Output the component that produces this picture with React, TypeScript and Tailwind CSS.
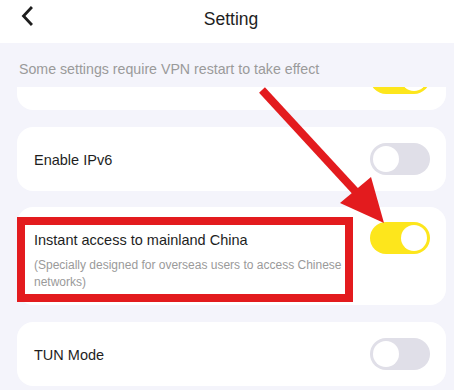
type ToggleProps = { on?: boolean };

const Toggle = ({ on }: ToggleProps) => (
  <div
    className={
      on
        ? "flex h-[32px] w-[60px] shrink-0 items-center justify-end rounded-full bg-[#fde61c] px-[3px]"
        : "flex h-[32px] w-[60px] shrink-0 items-center justify-start rounded-full bg-[#e0dfe8] px-[3px]"
    }
  >
    <div className="h-[26px] w-[26px] rounded-full bg-white" />
  </div>
);

const Row = ({ title, on }: { title?: string; on?: boolean }) => (
  <div className="flex h-[64px] items-center justify-between rounded-[16px] bg-white pl-[17px] pr-[16px]">
    <span className="pt-[3px] text-[14.5px] text-[#1e1e1e]">{title}</span>
    <Toggle on={on} />
  </div>
);

export default function App() {
  return (
    <div
      className="relative h-[390px] w-[454px] overflow-hidden bg-[#f4f4fb]"
      style={{ fontFamily: '"Liberation Sans", Arial, sans-serif' }}
    >
      {/* header */}
      <div className="relative flex h-[43px] items-center justify-center bg-white pb-[4px] pl-[8px]">
        <svg className="absolute left-[18px] top-[5px]" width="18" height="22" viewBox="0 0 18 22" fill="none">
          <path d="M13 3 L5.5 11 L13 19" stroke="#1e1e1e" strokeWidth="2.8" strokeLinecap="square" />
        </svg>
        <span className="text-[17.5px] text-[#1e1e1e]">Setting</span>
      </div>

      <div className="h-[44px] pl-[19px] pt-[18px] text-[14.2px] leading-[17px] text-[#9a9a9a]">
        Some settings require VPN restart to take effect
      </div>

      {/* scrolled list, first card mostly under the hint */}
      <div className="h-[303px] overflow-hidden pl-[17px] pr-[8px]">
        <div className="-mt-[41px] flex flex-col">
          <Row on />
          <div className="h-[17px]" />
          <Row title="Enable IPv6" />
          <div className="h-[16px]" />
          <div className="relative flex items-start justify-between rounded-[16px] bg-white pb-[14px] pl-[17px] pr-[16px] pt-[16px]">
            <div className="w-[316px]">
              <div className="flex h-[32px] items-center pt-[3px] text-[14.5px] text-[#1e1e1e]">
                Instant access to mainland China
              </div>
              <div className="mt-[2px] text-[12px] leading-[17px] text-[#9a9a9a]">
                (Specially designed for overseas users to access Chinese networks)
              </div>
            </div>
            <div className="-mt-[1px]">
              <Toggle on />
            </div>
            <div className="absolute left-0 top-[10px] h-[85px] w-[336px] border-[8px] border-[#e31b1e]" />
          </div>
          <div className="h-[17px]" />
          <Row title="TUN Mode" />
        </div>
      </div>

      {/* annotation arrow */}
      <svg className="absolute left-0 top-0" width="454" height="390" viewBox="0 0 454 390">
        <line x1="262" y1="90" x2="357" y2="193" stroke="#e31b1e" strokeWidth="8" />
        <polygon points="384,223 340,203 371,177" fill="#e31b1e" />
      </svg>
    </div>
  );
}
